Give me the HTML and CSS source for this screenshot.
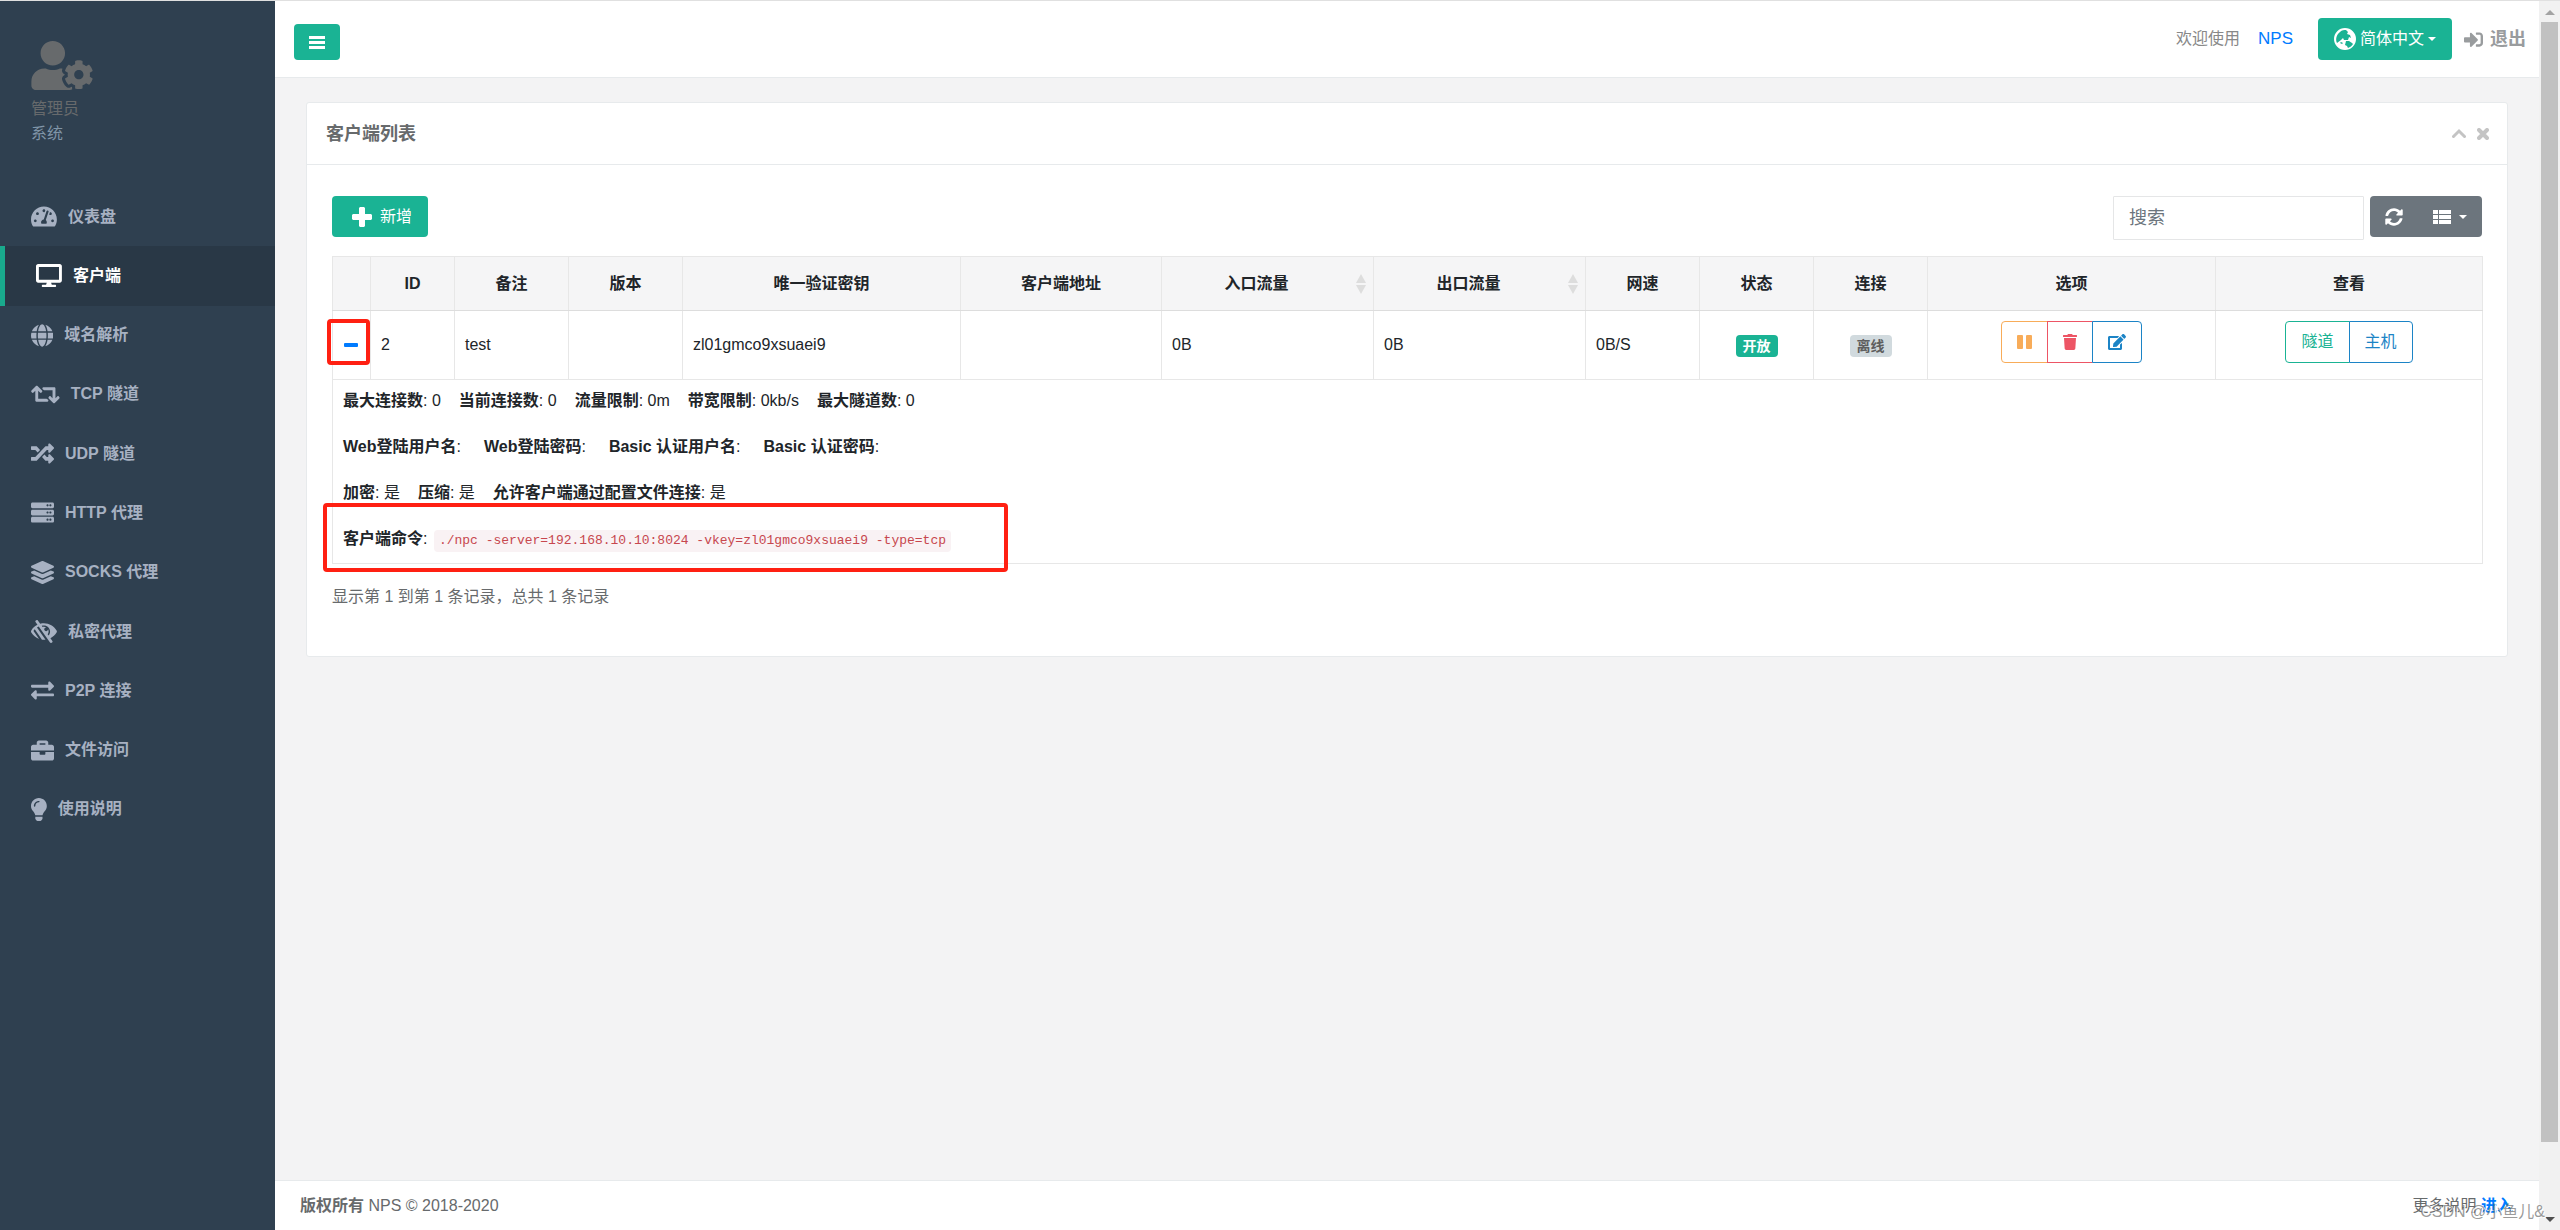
FILE: index.html
```html
<!DOCTYPE html>
<html lang="zh-CN">
<head>
<meta charset="utf-8">
<title>NPS - 客户端列表</title>
<link rel="stylesheet" href="styles.css">
</head>
<body>
<div class="app">
  <nav class="sidebar">
    <div class="profile">
      <svg class="profile-icon" viewBox="0 0 640 512"><path d="M610.5 373.3c2.6-14.1 2.6-28.5 0-42.6l25.8-14.9c3-1.7 4.3-5.2 3.3-8.5-6.7-21.6-18.2-41.2-33.2-57.4-2.3-2.5-6-3.1-9-1.4l-25.8 14.9c-10.9-9.3-23.4-16.5-36.9-21.3v-29.8c0-3.4-2.4-6.4-5.7-7.1-22.3-5-45-4.8-66.2 0-3.3.7-5.7 3.7-5.7 7.1v29.8c-13.5 4.8-26 12-36.9 21.3l-25.8-14.9c-2.9-1.7-6.7-1.1-9 1.4-15 16.2-26.5 35.8-33.2 57.4-1 3.3.4 6.8 3.3 8.5l25.8 14.9c-2.6 14.1-2.6 28.5 0 42.6l-25.8 14.9c-3 1.7-4.3 5.2-3.3 8.5 6.7 21.6 18.2 41.1 33.2 57.4 2.3 2.5 6 3.1 9 1.4l25.8-14.9c10.9 9.3 23.4 16.5 36.9 21.3v29.8c0 3.4 2.4 6.4 5.7 7.1 22.3 5 45 4.8 66.2 0 3.3-.7 5.7-3.7 5.7-7.1v-29.8c13.5-4.8 26-12 36.9-21.3l25.8 14.9c2.9 1.7 6.7 1.1 9-1.4 15-16.2 26.5-35.8 33.2-57.4 1-3.3-.4-6.8-3.3-8.5l-25.8-14.9zM496 400.5c-26.8 0-48.5-21.8-48.5-48.5s21.8-48.5 48.5-48.5 48.5 21.8 48.5 48.5-21.7 48.5-48.5 48.5zM224 256c70.7 0 128-57.3 128-128S294.7 0 224 0 96 57.3 96 128s57.3 128 128 128zm201.2 226.5c-2.3-1.2-4.6-2.6-6.8-3.9l-7.9 4.6c-6 3.4-12.8 5.3-19.6 5.3-10.9 0-21.4-4.6-28.9-12.6-18.3-19.8-32.3-43.9-40.2-69.6-5.5-17.7 1.9-36.4 17.9-45.7l7.9-4.6c-.1-2.6-.1-5.2 0-7.8l-7.9-4.6c-16-9.2-23.4-28-17.9-45.7.9-2.9 2.2-5.8 3.2-8.7-3.8-.3-7.5-1.2-11.4-1.2h-16.7c-22.2 10.2-46.9 16-72.9 16s-50.6-5.8-72.9-16h-16.7C60.2 288 0 348.2 0 422.4V464c0 26.5 21.5 48 48 48h352c10.1 0 19.5-3.2 27.2-8.5-1.2-3.8-2-7.7-2-11.8v-9.2z"/></svg>
      <span class="profile-name">管理员</span>
      <span class="profile-role">系统</span>
    </div>
    <ul class="menu">
      <li><a href="#"><svg class="menu-icon" viewBox="0 0 576 512"><path d="M288 32C128.94 32 0 160.94 0 320c0 52.8 14.25 102.26 39.06 144.8 5.61 9.62 16.3 15.2 27.44 15.2h443c11.14 0 21.83-5.58 27.44-15.2C561.75 422.26 576 372.8 576 320c0-159.06-128.94-288-288-288zm0 64c14.71 0 26.58 10.13 30.32 23.65-1.11 2.26-2.64 4.23-3.45 6.67l-9.22 27.67c-5.13 3.49-10.97 6.01-17.64 6.01-17.67 0-32-14.33-32-32S270.33 96 288 96zM96 384c-17.67 0-32-14.33-32-32s14.33-32 32-32 32 14.33 32 32-14.33 32-32 32zm48-160c-17.67 0-32-14.33-32-32s14.33-32 32-32 32 14.33 32 32-14.33 32-32 32zm246.77-72.41l-61.33 184C343.13 347.33 352 364.54 352 384c0 11.72-3.38 22.55-8.88 32H232.88c-5.5-9.45-8.88-20.28-8.88-32 0-33.94 26.5-61.43 59.9-63.59l61.34-184.01c4.17-12.56 17.73-19.45 30.36-15.17 12.57 4.19 19.35 17.79 15.17 30.36zm14.66 57.2l15.52-46.55c3.47-1.29 7.13-2.23 11.05-2.23 17.67 0 32 14.33 32 32s-14.33 32-32 32c-11.38-.01-20.89-6.28-26.57-15.22zM480 384c-17.67 0-32-14.33-32-32s14.33-32 32-32 32 14.33 32 32-14.33 32-32 32z"/></svg>仪表盘</a></li>
      <li class="active"><a href="#"><svg class="menu-icon" viewBox="0 0 576 512"><path d="M528 0H48C21.5 0 0 21.5 0 48v320c0 26.5 21.5 48 48 48h192l-16 48h-72c-13.3 0-24 10.7-24 24s10.7 24 24 24h272c13.3 0 24-10.7 24-24s-10.7-24-24-24h-72l-16-48h192c26.5 0 48-21.5 48-48V48c0-26.5-21.5-48-48-48zm-16 352H64V64h448v288z"/></svg>客户端</a></li>
      <li><a href="#"><svg class="menu-icon" viewBox="0 0 496 512"><path d="M336.5 160C322 70.7 287.8 8 248 8s-74 62.7-88.5 152h177zM152 256c0 22.2 1.2 43.5 3.3 64h185.3c2.1-20.5 3.3-41.8 3.3-64s-1.2-43.5-3.3-64H155.3c-2.1 20.5-3.3 41.8-3.3 64zm324.7-96c-28.6-67.9-86.5-120.4-158-141.6 24.4 33.8 41.2 84.7 50 141.6h108zM177.2 18.4C105.8 39.6 47.8 92.1 19.3 160h108c8.7-56.9 25.5-107.8 49.9-141.6zM487.4 192H372.7c2.1 21 3.3 42.5 3.3 64s-1.2 43-3.3 64h114.6c5.5-20.5 8.6-41.8 8.6-64s-3.1-43.5-8.5-64zM120 256c0-21.5 1.2-43 3.3-64H8.6C3.2 212.5 0 233.8 0 256s3.2 43.5 8.6 64h114.6c-2-21-3.2-42.5-3.2-64zm39.5 96c14.5 89.3 48.7 152 88.5 152s74-62.7 88.5-152h-177zm159.3 141.6c71.4-21.2 129.4-73.7 158-141.6h-108c-8.8 56.9-25.6 107.8-50 141.6zM19.3 352c28.6 67.9 86.5 120.4 158 141.6-24.4-33.8-41.2-84.7-50-141.6h-108z"/></svg>域名解析</a></li>
      <li><a href="#"><svg class="menu-icon" viewBox="0 0 640 512"><path d="M629.657 343.598L528.971 444.284c-9.373 9.372-24.568 9.372-33.941 0L394.343 343.598c-9.373-9.373-9.373-24.569 0-33.941l10.823-10.823c9.562-9.562 25.133-9.34 34.419.492L480 342.118V160H292.451a24.005 24.005 0 0 1-16.971-7.029l-16-16C244.361 121.851 255.069 96 276.451 96H520c13.255 0 24 10.745 24 24v222.118l40.416-42.792c9.285-9.831 24.856-10.054 34.419-.492l10.823 10.823c9.372 9.372 9.372 24.569-.001 33.941zm-265.138 15.431A23.999 23.999 0 0 0 347.548 352H160V169.881l40.416 42.792c9.286 9.831 24.856 10.054 34.419.491l10.822-10.822c9.373-9.373 9.373-24.569 0-33.941L144.971 67.716c-9.373-9.373-24.569-9.373-33.941 0L10.343 168.402c-9.373 9.373-9.373 24.569 0 33.941l10.822 10.822c9.562 9.562 25.133 9.34 34.419-.491L96 169.881V392c0 13.255 10.745 24 24 24h243.549c21.382 0 32.09-25.851 16.971-40.971l-16.001-16z"/></svg>TCP 隧道</a></li>
      <li><a href="#"><svg class="menu-icon" viewBox="0 0 512 512"><path d="M504.971 359.029c9.373 9.373 9.373 24.569 0 33.941l-80 79.984c-15.01 15.01-40.971 4.49-40.971-16.971V416h-58.785a12.004 12.004 0 0 1-8.773-3.812l-70.556-75.596 53.333-57.143L352 336h32v-39.981c0-21.438 25.943-31.998 40.971-16.971l80 79.981zM12 176h84l52.781 56.551 53.333-57.143-70.556-75.596A11.999 11.999 0 0 0 122.785 96H12c-6.627 0-12 5.373-12 12v56c0 6.627 5.373 12 12 12zm372 0v39.984c0 21.46 25.961 31.98 40.971 16.971l80-79.984c9.373-9.373 9.373-24.569 0-33.941l-80-79.981C409.943 24.021 384 34.582 384 56.019V96h-58.785a12.004 12.004 0 0 0-8.773 3.812L96 336H12c-6.627 0-12 5.373-12 12v56c0 6.627 5.373 12 12 12h110.785c3.326 0 6.503-1.381 8.773-3.812L352 176h32z"/></svg>UDP 隧道</a></li>
      <li><a href="#"><svg class="menu-icon" viewBox="0 0 512 512"><path fill-rule="evenodd" d="M480 160H32c-17.673 0-32-14.327-32-32V64c0-17.673 14.327-32 32-32h448c17.673 0 32 14.327 32 32v64c0 17.673-14.327 32-32 32zm-48-88c-13.255 0-24 10.745-24 24s10.745 24 24 24 24-10.745 24-24-10.745-24-24-24zm-64 0c-13.255 0-24 10.745-24 24s10.745 24 24 24 24-10.745 24-24-10.745-24-24-24zm112 248H32c-17.673 0-32-14.327-32-32v-64c0-17.673 14.327-32 32-32h448c17.673 0 32 14.327 32 32v64c0 17.673-14.327 32-32 32zm-48-88c-13.255 0-24 10.745-24 24s10.745 24 24 24 24-10.745 24-24-10.745-24-24-24zm-64 0c-13.255 0-24 10.745-24 24s10.745 24 24 24 24-10.745 24-24-10.745-24-24-24zm112 248H32c-17.673 0-32-14.327-32-32v-64c0-17.673 14.327-32 32-32h448c17.673 0 32 14.327 32 32v64c0 17.673-14.327 32-32 32zm-48-88c-13.255 0-24 10.745-24 24s10.745 24 24 24 24-10.745 24-24-10.745-24-24-24zm-64 0c-13.255 0-24 10.745-24 24s10.745 24 24 24 24-10.745 24-24-10.745-24-24-24z"/></svg>HTTP 代理</a></li>
      <li><a href="#"><svg class="menu-icon" viewBox="0 0 512 512"><path d="M12.41 148.02l232.94 105.67c6.8 3.09 14.49 3.09 21.29 0l232.94-105.67c16.55-7.51 16.55-32.52 0-40.03L266.65 2.31a25.607 25.607 0 0 0-21.29 0L12.41 107.98c-16.55 7.51-16.55 32.53 0 40.04zm487.18 88.28l-58.09-26.33-161.64 73.27c-7.56 3.43-15.59 5.17-23.86 5.17s-16.29-1.74-23.86-5.17L70.51 209.97l-58.1 26.33c-16.55 7.5-16.55 32.5 0 40l232.94 105.59c6.8 3.08 14.49 3.08 21.29 0L499.59 276.3c16.55-7.5 16.55-32.5 0-40zm0 127.8l-57.87-26.23-161.86 73.37c-7.56 3.43-15.59 5.17-23.86 5.17s-16.29-1.74-23.86-5.17L70.29 337.87 12.41 364.1c-16.55 7.5-16.55 32.5 0 40l232.94 105.59c6.8 3.08 14.49 3.08 21.29 0L499.59 404.1c16.55-7.5 16.55-32.5 0-40z"/></svg>SOCKS 代理</a></li>
      <li><a href="#"><svg class="menu-icon" viewBox="0 0 576 512"><path d="M569.344 231.631C512.96 135.949 407.81 72 288 72c-28.468 0-56.102 3.619-82.451 10.414L152.778 10.24c-7.601-10.858-22.564-13.5-33.423-5.9l-13.114 9.178c-10.86 7.601-13.502 22.566-5.9 33.426l43.131 58.395C89.449 131.73 40.228 174.683 6.682 231.581c-.01.017-.023.033-.034.05-8.765 14.875-8.964 33.528 0 48.739 38.5 65.332 99.742 115.862 172.859 141.349L55.316 244.302A272.194 272.194 0 0 1 83.61 208.39l119.4 170.58h.01l40.63 58.04a330.055 330.055 0 0 0 78.94 1.17l-189.98-271.4a277.628 277.628 0 0 1 38.777-21.563l251.836 356.544c7.601 10.858 22.564 13.499 33.423 5.9l13.114-9.178c10.86-7.601 13.502-22.567 5.9-33.426l-43.12-58.377-.007-.009c57.161-27.978 104.835-72.04 136.81-126.301a47.938 47.938 0 0 0 .001-48.739zM390.026 345.94l-19.066-27.23c24.682-32.567 27.711-76.353 8.8-111.68v.03c0 23.65-19.17 42.82-42.82 42.82-23.828 0-42.82-19.349-42.82-42.82 0-23.65 19.17-42.82 42.82-42.82h.03c-24.75-13.249-53.522-15.643-79.51-7.68l-19.068-27.237C253.758 123.306 270.488 120 288 120c75.162 0 136 60.827 136 136 0 34.504-12.833 65.975-33.974 89.94z"/></svg>私密代理</a></li>
      <li><a href="#"><svg class="menu-icon" viewBox="0 0 512 512"><path d="M0 168v-16c0-13.255 10.745-24 24-24h360V80c0-21.367 25.899-32.042 40.971-16.971l80 80c9.372 9.373 9.372 24.569 0 33.941l-80 80C409.956 271.982 384 261.456 384 240v-48H24c-13.255 0-24-10.745-24-24zm488 152H128v-48c0-21.314-25.862-32.08-40.971-16.971l-80 80c-9.372 9.373-9.372 24.569 0 33.941l80 80C102.057 463.997 128 453.437 128 432v-48h360c13.255 0 24-10.745 24-24v-16c0-13.255-10.745-24-24-24z"/></svg>P2P 连接</a></li>
      <li><a href="#"><svg class="menu-icon" viewBox="0 0 512 512"><path d="M320 336c0 8.84-7.16 16-16 16h-96c-8.84 0-16-7.16-16-16v-48H0v144c0 25.6 22.4 48 48 48h416c25.6 0 48-22.4 48-48V288H320v48zm144-208h-80V80c0-25.6-22.4-48-48-48H176c-25.6 0-48 22.4-48 48v48H48c-25.6 0-48 22.4-48 48v80h512v-80c0-25.6-22.4-48-48-48zm-144 0H192V96h128v32z"/></svg>文件访问</a></li>
      <li><a href="#"><svg class="menu-icon" viewBox="0 0 352 512"><path d="M96.06 454.35c.01 6.29 1.87 12.45 5.36 17.69l17.09 25.69a31.99 31.99 0 0 0 26.64 14.28h61.71a31.99 31.99 0 0 0 26.64-14.28l17.09-25.69a31.989 31.989 0 0 0 5.36-17.69l.04-38.35H96.01l.05 38.35zM0 176c0 44.37 16.45 84.85 43.56 115.78 16.52 18.85 42.36 58.23 52.21 91.45.04.26.07.52.11.78h160.24c.04-.26.07-.51.11-.78 9.85-33.22 35.69-72.6 52.21-91.45C335.55 260.85 352 220.37 352 176 352 78.61 272.91-.3 175.45 0 73.44.31 0 82.97 0 176zm176-80c-44.11 0-80 35.89-80 80 0 8.84-7.16 16-16 16s-16-7.16-16-16c0-61.76 50.24-112 112-112 8.84 0 16 7.16 16 16s-7.16 16-16 16z"/></svg>使用说明</a></li>
    </ul>
  </nav>

  <div class="page">
    <header class="topbar">
      <button class="btn btn-primary btn-toggle" type="button" aria-label="菜单">
        <svg width="16" height="16" viewBox="0 0 16 16"><path d="M0 2h16v3H0zM0 7h16v3H0zM0 12h16v3H0z"/></svg>
      </button>
      <div class="topbar-right">
        <span class="welcome">欢迎使用</span>
        <a class="brand" href="#">NPS</a>
        <button class="btn btn-primary btn-lang" type="button">
          <svg width="22" height="22" viewBox="0 0 22 22"><path fill-rule="evenodd" d="M11 0a11 11 0 1 1 0 22a11 11 0 0 1 0-22zM12 2l2 2-1 2 3 1 1 3-2-1-1 3-4 0-1-2-2 2-4 3c-2-4 0-9 3-11 2-2 4-2 6-2zM12 13l3 0 3 2 1 1c-1 2-3 3-5 4l-1-2-2-1zM7 14l2 1-1 1-2-1z"/></svg>
          简体中文<i class="caret"></i>
        </button>
        <a class="logout" href="#"><svg width="19" height="19" viewBox="0 0 512 512"><path d="M416 448h-84c-6.600 0-12-5.400-12-12v-40c0-6.600 5.400-12 12-12h84c17.700 0 32-14.300 32-32V160c0-17.700-14.300-32-32-32h-84c-6.600 0-12-5.400-12-12V76c0-6.600 5.400-12 12-12h84c53 0 96 43 96 96v192c0 53-43 96-96 96zm-47-201L201 79c-15-15-41-4.500-41 17v96H24c-13.300 0-24 10.700-24 24v96c0 13.300 10.700 24 24 24h136v96c0 21.500 26 32 41 17l168-168c9.300-9.400 9.300-24.600 0-34z"/></svg>退出</a>
      </div>
    </header>

    <main class="content">
      <section class="panel">
        <div class="panel-title">
          <h5>客户端列表</h5>
          <div class="panel-tools">
            <a href="#" aria-label="收起"><svg width="14" height="12" viewBox="0 0 14 12"><path d="M1.500 8.500L7 3l5.500 5.500" fill="none" stroke="currentColor" stroke-width="3" stroke-linecap="round"/></svg></a>
            <a href="#" aria-label="关闭"><svg width="12" height="12" viewBox="0 0 12 12"><path d="M2 2l8 8M10 2l-8 8" fill="none" stroke="currentColor" stroke-width="4" stroke-linecap="round"/></svg></a>
          </div>
        </div>
        <div class="panel-body">
          <div class="toolbar">
            <button class="btn btn-primary btn-add" type="button"><svg width="20" height="20" viewBox="0 0 20 20"><path d="M8 0h4l1 1v6h6l1 1v4l-1 1h-6v6l-1 1H8l-1-1v-6H1l-1-1V8l1-1h6V1z"/></svg>新增</button>
            <div class="toolbar-right">
              <input class="search" type="search" placeholder="搜索" aria-label="搜索">
              <div class="tool-group">
                <button type="button" aria-label="刷新"><svg width="18" height="18" viewBox="0 0 512 512"><path d="M370.720 133.280C339.458 104.008 298.888 87.962 255.848 88c-77.458.068-144.328 53.178-162.791 126.850-1.344 5.363-6.122 9.150-11.651 9.150H24.103c-7.498 0-13.194-6.807-11.807-14.176C33.933 94.924 134.813 8 256 8c66.448 0 126.791 26.136 171.315 68.685L463.030 40.970C478.149 25.851 504 36.559 504 57.941V192c0 13.255-10.745 24-24 24H345.941c-21.382 0-32.090-25.851-16.971-40.971l41.750-41.749zM32 296h134.059c21.382 0 32.090 25.851 16.971 40.971l-41.750 41.750c31.262 29.273 71.835 45.319 114.876 45.280 77.418-.070 144.315-53.144 162.787-126.849 1.344-5.363 6.122-9.150 11.651-9.150h57.304c7.498 0 13.194 6.807 11.807 14.176C478.067 417.076 377.187 504 256 504c-66.448 0-126.791-26.136-171.315-68.685L48.970 471.030C33.851 486.149 8 475.441 8 454.059V320c0-13.255 10.745-24 24-24z"/></svg></button>
                <button type="button" aria-label="列"><svg width="18" height="16" viewBox="0 0 18 16"><path d="M0 1h5v4H0zM6 1h12v4H6zM0 6h5v4H0zM6 6h12v4H6zM0 11h5v4H0zM6 11h12v4H6z"/></svg><i class="caret"></i></button>
              </div>
            </div>
          </div>

          <table class="clients">
            <colgroup>
              <col class="c-toggle"><col class="c-id"><col class="c-short"><col class="c-short"><col class="c-key"><col class="c-addr"><col class="c-flow"><col class="c-flow"><col class="c-short"><col class="c-short"><col class="c-short"><col class="c-opts"><col class="c-view">
            </colgroup>
            <thead>
              <tr>
                <th></th><th>ID</th><th>备注</th><th>版本</th><th>唯一验证密钥</th><th>客户端地址</th>
                <th class="sortable">入口流量</th><th class="sortable">出口流量</th>
                <th>网速</th><th>状态</th><th>连接</th><th>选项</th><th>查看</th>
              </tr>
            </thead>
            <tbody>
              <tr class="client">
                <td class="toggle"><a href="#" aria-label="收起详情"><i class="minus"></i></a><span class="mark mark-toggle"></span></td>
                <td>2</td><td>test</td><td></td><td>zl01gmco9xsuaei9</td><td></td><td>0B</td><td>0B</td><td>0B/S</td>
                <td class="center"><span class="badge badge-on">开放</span></td>
                <td class="center"><span class="badge badge-off">离线</span></td>
                <td class="center">
                  <div class="actions">
                    <button class="warn" type="button" aria-label="暂停"><svg width="15" height="16" viewBox="0 0 15 16"><rect x="0" y="1" width="6" height="14" rx="1"/><rect x="9" y="1" width="6" height="14" rx="1"/></svg></button>
                    <button class="danger" type="button" aria-label="删除"><svg width="14" height="16" viewBox="0 0 448 512"><path d="M432 32H312l-9.400-18.700A24 24 0 0 0 281.100 0H166.800a23.720 23.720 0 0 0-21.400 13.300L136 32H16A16 16 0 0 0 0 48v32a16 16 0 0 0 16 16h416a16 16 0 0 0 16-16V48a16 16 0 0 0-16-16zM53.200 467a48 48 0 0 0 47.900 45h245.800a48 48 0 0 0 47.900-45L416 128H32z"/></svg></button>
                    <button class="info" type="button" aria-label="编辑"><svg width="18" height="16" viewBox="0 0 576 512"><path d="M402.600 83.200l90.200 90.200c3.800 3.800 3.800 10 0 13.800L274.400 405.600l-92.800 10.300c-12.400 1.400-22.900-9.100-21.500-21.500l10.300-92.800L388.800 83.200c3.800-3.800 10-3.800 13.800 0zm162-22.900l-48.800-48.800c-15.200-15.200-39.900-15.200-55.200 0l-35.400 35.400c-3.800 3.800-3.800 10 0 13.800l90.200 90.200c3.800 3.800 10 3.800 13.800 0l35.400-35.400c15.200-15.300 15.200-40 0-55.200zM384 346.200V448H64V128h229.800c3.200 0 6.200-1.300 8.500-3.500l40-40c7.600-7.600 2.200-20.500-8.500-20.500H48C21.500 64 0 85.500 0 112v352c0 26.500 21.500 48 48 48h352c26.500 0 48-21.500 48-48V306.200c0-10.700-12.900-16-20.500-8.500l-40 40c-2.200 2.300-3.500 5.300-3.500 8.500z"/></svg></button>
                  </div>
                </td>
                <td class="center">
                  <div class="actions">
                    <button class="primary" type="button">隧道</button>
                    <button class="info" type="button">主机</button>
                  </div>
                </td>
              </tr>
              <tr>
                <td class="detail" colspan="13">
                  <p><span><b>最大连接数</b>: 0</span><span><b>当前连接数</b>: 0</span><span><b>流量限制</b>: 0m</span><span><b>带宽限制</b>: 0kb/s</span><span><b>最大隧道数</b>: 0</span></p>
                  <p class="wide"><span><b>Web登陆用户名</b>:</span><span><b>Web登陆密码</b>:</span><span><b>Basic 认证用户名</b>:</span><span><b>Basic 认证密码</b>:</span></p>
                  <p><span><b>加密</b>: 是</span><span><b>压缩</b>: 是</span><span><b>允许客户端通过配置文件连接</b>: 是</span></p>
                  <p><span><b>客户端命令</b>: <code>./npc -server=192.168.10.10:8024 -vkey=zl01gmco9xsuaei9 -type=tcp</code></span></p>
                  <span class="mark mark-command"></span>
                </td>
              </tr>
            </tbody>
          </table>
          <div class="summary">显示第 1 到第 1 条记录，总共 1 条记录</div>
        </div>
      </section>
    </main>

    <footer class="footer">
      <div><strong>版权所有</strong> NPS © 2018-2020</div>
      <div>更多说明 <a href="#">进入</a></div>
    </footer>
  </div>

  <div class="scrollbar"><i class="arrow-up"></i><div class="thumb"></div><i class="arrow-down"></i></div>
  <div class="watermark">CSDN @小鱼儿&amp;</div>
</div>
</body>
</html>
```
FILE: styles.css
```css
* { box-sizing: border-box; }
body {
  margin: 0;
  font: 16px/24px "Liberation Sans", "Noto Sans CJK SC", sans-serif;
  color: #676a6c;
  background: #f3f3f4;
}
a { color: #007bff; text-decoration: none; }
button { font: inherit; cursor: pointer; }
svg { display: block; fill: currentColor; flex: none; }
i { display: block; }

.app {
  position: relative;
  display: flex;
  min-height: 100vh;
  border-top: 1px solid #e0e0e0;
}

/* sidebar */
.sidebar { width: 275px; flex: none; background: #2f4050; }
.profile {
  display: flex;
  flex-direction: column;
  height: 186px;
  padding: 40px 31px 0;
}
.profile-icon { width: 62px; height: 49px; margin-bottom: 6px; color: #676a6c; }
.profile-name { line-height: 26px; }
.profile-role { color: #8095a8; }
.menu {
  display: grid;
  grid-auto-rows: 1fr;
  height: 652px;
  margin: 0;
  padding: 0;
  list-style: none;
}
.menu a {
  display: flex;
  align-items: center;
  gap: 11px;
  height: 100%;
  padding-left: 31px;
  color: #a7b1c2;
  font-weight: 600;
}
.menu .active { background: #293846; border-left: 5px solid #19aa8d; }
.menu .active a { color: #fff; }
.menu-icon { height: 23px; }

/* page frame */
.page { flex: 1; min-width: 0; display: flex; flex-direction: column; }
.topbar {
  display: flex;
  justify-content: space-between;
  align-items: flex-start;
  height: 77px;
  padding: 17px 13px 0 19px;
  background: #fff;
  border-bottom: 1px solid #e7eaec;
}
.topbar-right { display: flex; align-items: center; }
.btn {
  display: flex;
  align-items: center;
  border: 0;
  border-radius: 4px;
  padding: 0;
}
.btn-primary { background: #1ab394; color: #fff; }
.btn-toggle { width: 46px; height: 36px; margin-top: 6px; justify-content: center; }
.btn-lang { height: 42px; padding: 0 16px; gap: 4px; }
.caret { border: 4px solid transparent; border-top-color: currentColor; border-bottom: 0; }
.welcome { color: #888; margin-right: 18px; }
.brand { font-size: 17px; margin-right: 25px; }
.logout {
  display: flex;
  align-items: center;
  gap: 7px;
  margin-left: 12px;
  color: #999c9e;
  font-size: 18px;
  font-weight: 600;
}
.content { flex: 1; padding: 24px 31px; }

/* panel */
.panel { background: #fff; border: 1px solid #e7eaec; border-radius: 3px; }
.panel-title {
  display: flex;
  justify-content: space-between;
  align-items: center;
  height: 62px;
  padding: 0 18px 0 19px;
  border-bottom: 1px solid #e7eaec;
}
.panel-title h5 { margin: 0; font-size: 18px; font-weight: 600; }
.panel-tools { display: flex; align-items: center; gap: 11px; }
.panel-tools a { color: #c4c4c4; }
.panel-body { padding: 31px 25px 47px; }

.toolbar { display: flex; justify-content: space-between; align-items: flex-start; margin-bottom: 16px; }
.toolbar-right { display: flex; align-items: flex-start; gap: 6px; }
.btn-add { height: 41px; padding: 0 16px 0 20px; gap: 8px; }
.search {
  width: 251px;
  height: 44px;
  padding: 0 15px;
  border: 1px solid #e5e6e7;
  border-radius: 1px;
  font: inherit;
  font-size: 18px;
  background: #fff;
}
.search::placeholder { color: #6c757d; opacity: 1; }
.tool-group { display: flex; border-radius: 4px; background: #6c757d; overflow: hidden; }
.tool-group button {
  display: flex;
  align-items: center;
  gap: 8px;
  height: 41px;
  padding: 0 15px;
  border: 0;
  background: none;
  color: #fff;
}

/* table */
.clients {
  width: 100%;
  table-layout: fixed;
  border-collapse: collapse;
  color: #212529;
}
.clients th, .clients td { border: 1px solid #e7e7e7; padding: 0 10px; text-align: left; }
.clients th {
  height: 54px;
  background: #f5f5f6;
  border-bottom-color: #ddd;
  font-weight: 600;
  text-align: center;
}
.clients .client td { height: 69px; }
.clients .center { text-align: center; }
.c-toggle { width: 38px; }
.c-id { width: 84px; }
.c-short { width: 114px; }
.c-key { width: 278px; }
.c-addr { width: 201px; }
.c-flow { width: 212px; }
.c-opts { width: 288px; }
.c-view { width: 267px; }
.clients .sortable {
  padding: 0 32px 0 10px;
  background: #f5f5f6 url("data:image/svg+xml,%3Csvg xmlns='http://www.w3.org/2000/svg' width='10' height='20'%3E%3Cpath d='M5 0l5 9H0zM5 20l5-9H0z' fill='%23ddd'/%3E%3C/svg%3E") no-repeat right 7px center;
}
.clients .toggle { position: relative; }
.minus { width: 14px; height: 4px; margin-left: 1px; background: #007bff; border-radius: 1px; }
.badge {
  display: inline-block;
  padding: 0 7px;
  border-radius: 4px;
  font-size: 14px;
  line-height: 22px;
  font-weight: 600;
  vertical-align: middle;
}
.badge-on { background: #1ab394; color: #fff; }
.badge-off { background: #d1dade; color: #5e5e5e; }

.actions { display: inline-flex; vertical-align: middle; margin-bottom: 6px; }
.actions button {
  display: flex;
  align-items: center;
  height: 42px;
  padding: 0 15px;
  background: #fff;
  border: 1px solid currentColor;
}
.actions button + button { margin-left: -1px; }
.actions button:first-child { border-radius: 4px 0 0 4px; }
.actions button:last-child { border-radius: 0 4px 4px 0; }
.actions .warn { color: #f8ac59; }
.actions .danger { color: #ed5565; }
.actions .info { color: #1c84c6; }
.actions .primary { color: #1ab394; }

.clients .detail { position: relative; padding: 9px 10px 11px; }
.detail p { display: flex; gap: 18px; margin: 0 0 22px; }
.detail .wide { gap: 23px; }
.detail p:last-of-type { margin-bottom: 0; }
.detail code {
  display: inline-block;
  margin-left: 2px;
  padding: 0 5px;
  border-radius: 4px;
  background: #f9f2f4;
  color: #c7474e;
  font: 13px/22px "Liberation Mono", monospace;
}
.summary { padding-top: 21px; }

/* red highlight frames drawn over the table */
.mark { position: absolute; border: 4px solid #ff2012; border-radius: 4px; pointer-events: none; }
.mark-toggle { top: 8px; left: -6px; right: 0; height: 46px; }
.mark-command { left: -10px; bottom: -9px; width: 685px; height: 69px; }

/* footer */
.footer {
  display: flex;
  justify-content: space-between;
  align-items: center;
  height: 50px;
  padding: 0 26px 0 25px;
  background: #fff;
  border-top: 1px solid #e7eaec;
}
.footer strong, .footer a { font-weight: 600; }

/* scrollbar strip */
.scrollbar {
  display: flex;
  flex-direction: column;
  align-items: center;
  width: 21px;
  flex: none;
  padding: 9px 0 8px;
  background: #f1f1f1;
}
.thumb { width: 17px; flex: 1; margin: 7px 0 75px; background: #c1c1c1; }
.arrow-up { border: 5px solid transparent; border-bottom-color: #a3a3a3; border-top: 0; }
.arrow-down { border: 5px solid transparent; border-top-color: #505050; border-bottom: 0; }

.watermark {
  position: absolute;
  right: 15px;
  bottom: 6px;
  color: rgba(110, 110, 110, .7);
  text-shadow: 1px 1px 0 #fff;
  pointer-events: none;
}
```
